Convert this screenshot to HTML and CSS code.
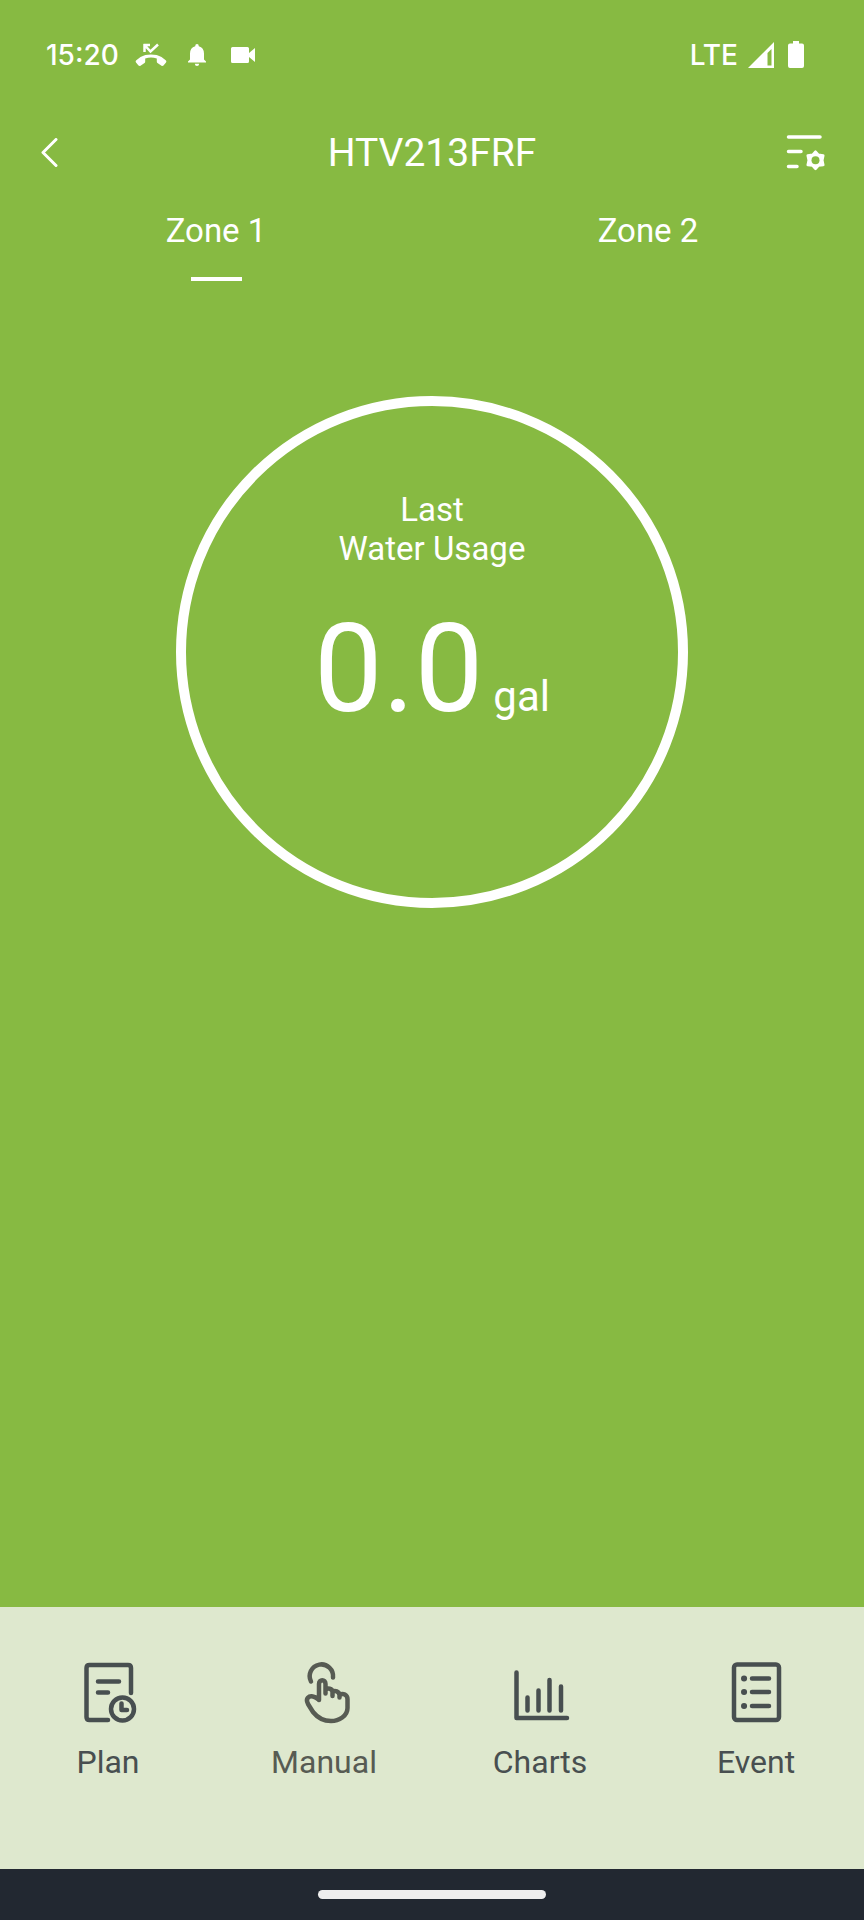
FILE: index.html
```html
<!DOCTYPE html>
<html lang="en">
<head>
  <meta charset="utf-8">
  <meta name="viewport" content="width=device-width, initial-scale=1">
  <title>HTV213FRF</title>
  <link rel="stylesheet" href="styles.css">
</head>
<body>
  <div class="status-bar">
    <div class="status-left">
      <span class="status-text">15:20</span>
      <svg class="icon-call" width="32" height="24" viewBox="0 0 32 24">
        <path d="M9.500 9V1M8.500 2H15M9.500 2L15.500 8.500L23 1.500" fill="none" stroke="#fff" stroke-width="2.500"/>
        <path d="M16 11.500C20 11.500 23.500 12.300 26.500 14L31 17.500Q31.800 18.300 31 19.500L28.500 22.500Q27.500 23.300 26.500 22.700L22.500 20Q21.800 19.500 21.800 18.500V15.400Q16 13.400 10.200 15.400V18.500Q10.200 19.500 9.500 20L5.500 22.700Q4.500 23.300 3.500 22.500L1 19.500Q.2 18.300 1 17.500L5.500 14C8.500 12.300 12 11.500 16 11.500Z" fill="#fff"/>
      </svg>
      <svg class="icon-bell" width="20" height="24" viewBox="0 0 20 24">
        <path d="M10 1Q11.800 1 11.800 3.200Q17 4.800 17 10.500V16.500L19 18.500V19.500H1V18.500L3 16.500V10.500Q3 4.800 8.200 3.200Q8.200 1 10 1ZM7.800 20.800H12.200Q12 23 10 23Q8 23 7.800 20.800Z" fill="#fff"/>
      </svg>
      <svg class="icon-video" width="24" height="18" viewBox="0 0 24 18">
        <path d="M1.500 1H16.500Q18 1 18 2.500V7L24 2V16L18 11V15.500Q18 17 16.500 17H1.500Q0 17 0 15.500V2.500Q0 1 1.500 1Z" fill="#fff"/>
      </svg>
    </div>
    <div class="status-right">
      <span class="status-text">LTE</span>
      <svg class="icon-signal" width="26" height="26" viewBox="0 0 26 26">
        <path d="M26 0V26H0ZM23.500 7L19.500 11V23.500H23.500Z" fill="#fff" fill-rule="evenodd"/>
      </svg>
      <svg width="16" height="28" viewBox="0 0 16 28">
        <path d="M5 0H11V2.500H14Q16 2.500 16 4.500V25Q16 27 14 27H2Q0 27 0 25V4.500Q0 2.500 2 2.500H5Z" fill="#fff"/>
      </svg>
    </div>
  </div>

  <header class="header">
    <button type="button" class="icon-btn" aria-label="Back">
      <svg width="20" height="30" viewBox="0 0 20 30">
        <path d="M18 1.500L5 14.500L18 27.500" fill="none" stroke="#fff" stroke-width="3" stroke-linecap="round" stroke-linejoin="round"/>
      </svg>
    </button>
    <h1 class="title">HTV213FRF</h1>
    <button type="button" class="icon-btn" aria-label="Settings">
      <svg width="40" height="38" viewBox="0 0 40 38">
        <path d="M2.500 3H34M2.500 17.500H15M2.500 32.500H11" fill="none" stroke="#fff" stroke-width="3.500" stroke-linecap="round"/>
        <path d="M29.500 17.600L32.400 20.800L37.300 21.500L36.300 26.200L37.300 30.900L32.400 31.600L29.500 34.800L26.600 31.600L21.700 30.900L22.700 26.200L21.700 21.500L26.600 20.800Z" fill="#fff" stroke="#fff" stroke-width="2.500" stroke-linejoin="round"/>
        <circle cx="29.500" cy="26.200" r="4" fill="#87ba42"/>
      </svg>
    </button>
  </header>

  <nav class="tabs">
    <button type="button" class="tab active">Zone 1</button>
    <button type="button" class="tab">Zone 2</button>
  </nav>

  <main class="content">
    <div class="ring">
      <p class="ring-label">Last<br>Water Usage</p>
      <p class="ring-value">0.0<span class="unit">gal</span></p>
    </div>
  </main>

  <nav class="bottom-nav">
    <a href="#plan" class="nav-item">
      <svg width="60" height="64" viewBox="0 0 60 64" fill="none" stroke="#484f50" stroke-width="4.500" stroke-linecap="round" stroke-linejoin="round">
        <path d="M53 32V7Q53 4 50 4H11.500Q8.500 4 8.500 7V56Q8.500 59 11.500 59H30"/>
        <path d="M20 20.500H41M20 31.500H30M43.500 42.500V49H49"/>
        <circle cx="44.500" cy="48" r="11.500"/>
      </svg>
      Plan
    </a>
    <a href="#manual" class="nav-item manual">
      <svg width="60" height="64" viewBox="0 0 60 64" fill="none" stroke="#575b53" stroke-width="4.500" stroke-linecap="round" stroke-linejoin="round">
        <path d="M17 20.500A11.700 11.700 0 1 1 39 16.500"/>
        <path d="M25 39V23C25 18 31.500 18 31.500 23V29C33.500 26.500 38.500 27.500 38.500 31C41 29 45 30.500 45.500 34C49 31.500 53.500 34 53.500 38V47C53.500 55 45 60 37 60C29 60 23 56 19 51L14 43C11 37.500 15 34.500 19 35.500Q22 36 25 39M31.500 29V32.500M38.500 31V35M45.500 34V36.500"/>
      </svg>
      Manual
    </a>
    <a href="#charts" class="nav-item">
      <svg width="60" height="64" viewBox="0 0 60 64" fill="none" stroke="#484f50" stroke-width="4.500" stroke-linecap="round" stroke-linejoin="round">
        <path d="M6.500 11.500V57H57M17.500 36.500V49.500M28.500 29.500V49.500M39.500 19V49.500M51 25.500V49.500"/>
      </svg>
      Charts
    </a>
    <a href="#event" class="nav-item">
      <svg width="60" height="64" viewBox="0 0 60 64" fill="none" stroke="#484f50" stroke-width="4.500" stroke-linecap="round">
        <rect x="8" y="3.500" width="45" height="55.500" rx="3"/>
        <path d="M26 17.500H43M26 31H43M26 45H43"/>
        <path d="M18 17.500H18.100M18 31H18.100M18 45H18.100" stroke-width="6"/>
      </svg>
      Event
    </a>
  </nav>

  <div class="home-bar">
    <div class="home-handle"></div>
  </div>
</body>
</html>
```
FILE: styles.css
```css
* {
  box-sizing: border-box;
}
body {
  margin: 0;
  min-height: 100vh;
  display: flex;
  flex-direction: column;
  background-color: #87ba42;
  color: #fff;
  font-family: Roboto, "Liberation Sans", sans-serif;
}
button {
  border: 0;
  padding: 0;
  background: none;
  color: inherit;
  font-family: inherit;
  cursor: pointer;
}
h1, p {
  margin: 0;
  font-weight: 400;
}
svg {
  display: block;
}

/* status bar */
.status-bar {
  display: flex;
  justify-content: space-between;
  align-items: center;
  height: 109px;
  padding: 0 60px 0 46px;
}
.status-left, .status-right {
  display: flex;
  align-items: center;
}
.status-left {
  gap: 20px;
}
.status-right {
  gap: 10px;
}
.status-text {
  font-family: Inter, Roboto, sans-serif;
  font-size: 28px;
  font-weight: 500;
}
.icon-call {
  margin-left: -4px;
}
.icon-video {
  margin-left: 4px;
}
.icon-signal {
  margin-right: 4px;
}

/* header */
.header {
  display: flex;
  justify-content: space-between;
  align-items: center;
  height: 88px;
  padding: 0 38px;
}
.icon-btn {
  width: 40px;
}
.title {
  font-size: 39px;
  line-height: 44px;
}

/* zone tabs */
.tabs {
  display: flex;
}
.tab {
  flex: 1;
  display: flex;
  flex-direction: column;
  align-items: center;
  gap: 26px;
  height: 90px;
  padding-top: 14px;
  font-size: 33px;
  line-height: 40px;
}
.tab.active::after {
  content: "";
  width: 51px;
  height: 4px;
  background-color: #fff;
}

/* water usage */
.content {
  flex: 1;
  padding-top: 109px;
}
.ring {
  width: 512px;
  height: 512px;
  margin: 0 auto;
  padding-top: 84px;
  border: 10px solid #fff;
  border-radius: 50%;
  text-align: center;
}
.ring-label {
  font-size: 33px;
  line-height: 39px;
}
.ring-value {
  display: flex;
  justify-content: center;
  align-items: baseline;
  gap: 10px;
  margin-top: 30px;
  font-size: 122px;
  line-height: 144px;
}
.unit {
  font-size: 42px;
  line-height: 50px;
}

/* bottom navigation */
.bottom-nav {
  display: flex;
  height: 262px;
  padding-top: 54px;
  background-color: #dee8ce;
}
.nav-item {
  flex: 1;
  display: flex;
  flex-direction: column;
  align-items: center;
  gap: 18px;
  color: #484f50;
  font-size: 32px;
  line-height: 38px;
  text-decoration: none;
}
.manual {
  color: #575b53;
}
.home-bar {
  display: flex;
  justify-content: center;
  align-items: center;
  height: 51px;
  background-color: #222831;
}
.home-handle {
  width: 228px;
  height: 9px;
  border-radius: 5px;
  background-color: #eee;
}
```
